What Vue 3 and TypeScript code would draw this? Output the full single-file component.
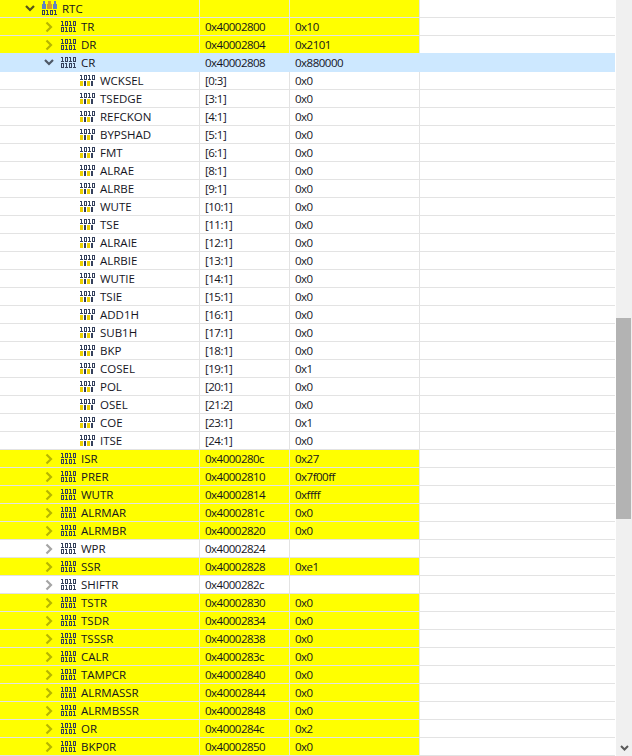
<script setup lang="ts">
type Kind = 'peripheral' | 'register' | 'field'
interface Row {
  name: string
  addr: string
  value: string
  kind: Kind
  hot?: boolean
  selected?: boolean
  open?: boolean
}

const reg = (name: string, addr: string, value: string, hot = true): Row => ({
  name, addr, value, hot, kind: 'register',
})
const field = (name: string, addr: string, value = '0x0'): Row => ({
  name, addr, value, kind: 'field',
})

const rows: Row[] = [
  { name: 'RTC', addr: '', value: '', kind: 'peripheral', hot: true, open: true },
  reg('TR', '0x40002800', '0x10'),
  reg('DR', '0x40002804', '0x2101'),
  { name: 'CR', addr: '0x40002808', value: '0x880000', kind: 'register', selected: true, open: true },
  field('WCKSEL', '[0:3]'),
  field('TSEDGE', '[3:1]'),
  field('REFCKON', '[4:1]'),
  field('BYPSHAD', '[5:1]'),
  field('FMT', '[6:1]'),
  field('ALRAE', '[8:1]'),
  field('ALRBE', '[9:1]'),
  field('WUTE', '[10:1]'),
  field('TSE', '[11:1]'),
  field('ALRAIE', '[12:1]'),
  field('ALRBIE', '[13:1]'),
  field('WUTIE', '[14:1]'),
  field('TSIE', '[15:1]'),
  field('ADD1H', '[16:1]'),
  field('SUB1H', '[17:1]'),
  field('BKP', '[18:1]'),
  field('COSEL', '[19:1]', '0x1'),
  field('POL', '[20:1]'),
  field('OSEL', '[21:2]'),
  field('COE', '[23:1]', '0x1'),
  field('ITSE', '[24:1]'),
  reg('ISR', '0x4000280c', '0x27'),
  reg('PRER', '0x40002810', '0x7f00ff'),
  reg('WUTR', '0x40002814', '0xffff'),
  reg('ALRMAR', '0x4000281c', '0x0'),
  reg('ALRMBR', '0x40002820', '0x0'),
  reg('WPR', '0x40002824', '', false),
  reg('SSR', '0x40002828', '0xe1'),
  reg('SHIFTR', '0x4000282c', '', false),
  reg('TSTR', '0x40002830', '0x0'),
  reg('TSDR', '0x40002834', '0x0'),
  reg('TSSSR', '0x40002838', '0x0'),
  reg('CALR', '0x4000283c', '0x0'),
  reg('TAMPCR', '0x40002840', '0x0'),
  reg('ALRMASSR', '0x40002844', '0x0'),
  reg('ALRMBSSR', '0x40002848', '0x0'),
  reg('OR', '0x4000284c', '0x2'),
  reg('BKP0R', '0x40002850', '0x0'),
]

const DARK = '#34405c'
const GOLD = '#ecd000'

function oneBar(x: number, y: number, fill: string) {
  return [
    { x: x + 1, y, w: 1, h: 5, fill },
    { x, y, w: 1, h: 1, fill },
    { x, y: y + 4, w: 3, h: 1, fill },
  ]
}
function zeroRing(x: number, y: number, fill: string) {
  return [
    { x, y, w: 3, h: 1, fill },
    { x, y: y + 4, w: 3, h: 1, fill },
    { x, y: y + 1, w: 1, h: 3, fill },
    { x: x + 2, y: y + 1, w: 1, h: 3, fill },
  ]
}

const topRow = [
  ...oneBar(0, 3, DARK), ...zeroRing(4, 3, DARK), ...oneBar(8, 3, DARK), ...zeroRing(12, 3, DARK),
]
const lowRow = [
  ...zeroRing(0, 9, DARK), ...oneBar(4, 9, DARK), ...zeroRing(8, 9, DARK), ...oneBar(12, 9, DARK),
]
const fieldLow = [
  { x: 0, y: 9, w: 3, h: 5, fill: GOLD }, { x: 4, y: 9, w: 2, h: 5, fill: DARK },
  { x: 7, y: 9, w: 3, h: 5, fill: GOLD }, { x: 11, y: 9, w: 2, h: 5, fill: DARK },
]
const peripheralLow = [
  ...zeroRing(0, 10, DARK), ...oneBar(4, 10, DARK), ...zeroRing(8, 10, DARK), ...oneBar(12, 10, DARK),
]
const BLUE = '#5f84c2'
const AMBER = '#d49a2c'
const people = [
  { x: 1, y: 1, w: 2, h: 3, fill: BLUE }, { x: 0, y: 4, w: 4, h: 5, fill: BLUE },
  { x: 6, y: 1, w: 3, h: 3, fill: AMBER }, { x: 5, y: 4, w: 5, h: 5, fill: AMBER },
  { x: 12, y: 1, w: 2, h: 3, fill: BLUE }, { x: 11, y: 4, w: 4, h: 5, fill: BLUE },
]

function iconRects(kind: Kind) {
  if (kind === 'peripheral') return [...people, ...peripheralLow]
  if (kind === 'field') return [...topRow, ...fieldLow]
  return [...topRow, ...lowRow]
}
</script>

<template>
  <div class="view">
    <div class="tree">
      <div
        v-for="row in rows"
        :key="row.name"
        class="row"
        :class="{ hot: row.hot, selected: row.selected }"
      >
        <div class="cell name" :class="row.kind">
          <svg
            v-if="row.kind !== 'field'"
            class="twisty"
            :class="{ open: row.open, dim: row.hot && !row.open, grey: !row.hot && !row.selected }"
            width="10" height="17" viewBox="0 0 10 17"
          >
            <path v-if="row.open" d="M1 6 L5 10 L9 6" />
            <path v-else d="M2.5 4.5 L7 9 L2.5 13.5" />
          </svg>
          <svg class="bits" width="15" height="17" viewBox="0 0 15 17" shape-rendering="crispEdges">
            <rect
              v-for="(r, i) in iconRects(row.kind)"
              :key="i"
              :x="r.x" :y="r.y" :width="r.w" :height="r.h" :fill="r.fill"
            />
          </svg>
          <span class="label">{{ row.name }}</span>
        </div>
        <div class="cell addr">{{ row.addr }}</div>
        <div class="cell val">{{ row.value }}</div>
        <div class="cell rest"></div>
      </div>
    </div>
    <div class="scrollbar">
      <svg class="arrow" width="16" height="16" viewBox="0 0 16 16">
        <path d="M5 6 L8.5 9.5 L12 6" />
      </svg>
      <div class="thumb"></div>
    </div>
  </div>
</template>

<style>
html, body { margin: 0; background: #fff; overflow: hidden; }
</style>

<style scoped>
.view {
  display: flex;
  width: 632px;
  height: 756px;
  overflow: hidden;
  font-family: "Open Sans", "Noto Sans", "Liberation Sans", sans-serif;
  font-size: 11.5px;
  color: #14141e;
}
.tree { width: 616px; flex: none; }
.row {
  display: grid;
  grid-template-columns: 200px 90px 130px 195px;
  height: 18px;
}
.cell {
  box-sizing: border-box;
  height: 18px;
  line-height: 17px;
  border-bottom: 1px solid #e3e3e3;
  border-right: 1px solid #e3e3e3;
  white-space: nowrap;
  overflow: hidden;
  background: #fff;
}
.row.hot .cell { background: #ffff00; }
.row .cell.rest { border-right: none; background: #fff; }
.row.selected .cell {
  background: #cde8ff;
  border-color: #cde8ff;
  box-shadow: 0 -1px 0 #cde8ff;
  overflow: visible;
}
.addr, .val {
  padding-left: 5px;
  letter-spacing: -0.5px;
}
.name {
  display: flex;
  align-items: flex-start;
}
.name.peripheral { padding-left: 25px; }
.name.register { padding-left: 44px; }
.name.field { padding-left: 80px; }
.twisty { flex: none; margin-right: 7px; }
.twisty path { fill: none; stroke: #a5a5a5; stroke-width: 2.2; }
.twisty.open path { stroke: #4e5866; }
.twisty.dim path { stroke: #b6b600; }
.twisty.grey path { stroke: #a5a5a5; }
.hot .twisty.open path { stroke: #55551a; }
.bits { flex: none; margin-right: 5px; }
.label { line-height: 17px; }
.scrollbar {
  position: relative;
  width: 16px;
  flex: none;
  background: #f0f0f0;
}
.arrow { position: absolute; left: 0; bottom: 0; }
.arrow path { fill: none; stroke: #5a5a5a; stroke-width: 2; }
.thumb {
  position: absolute;
  left: 0;
  right: 1px;
  top: 318px;
  height: 201px;
  background: #b3b3b3;
}
</style>
